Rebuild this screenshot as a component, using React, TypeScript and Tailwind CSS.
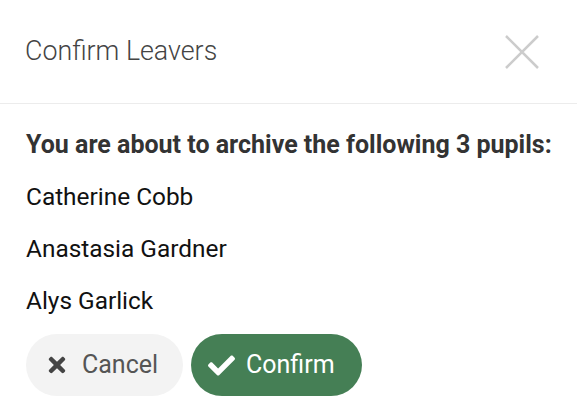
import { FaCheck, FaTimes } from "react-icons/fa";

const pupils = ["Catherine Cobb", "Anastasia Gardner", "Alys Garlick"];

export default function App() {
  return (
    <div className="w-[577px] h-[420px] bg-white font-['Roboto',sans-serif] overflow-hidden">
      <div className="h-[104px] flex items-center justify-between pl-[25px] pr-[38px] border-b border-[#ececec]">
        <h1 className="text-[26.8px] font-light text-[#444]">Confirm Leavers</h1>
        <button className="w-[34px] h-[34px] flex items-center justify-center">
          <svg width="34" height="34" viewBox="0 0 34 34">
            <path d="M1 1 L33 33 M33 1 L1 33" stroke="#cccccc" strokeWidth="2.5" />
          </svg>
        </button>
      </div>

      <div className="px-[26px] pt-[26px]">
        <p className="text-[25px] leading-[30px] font-bold text-[#333] mb-[22px] whitespace-nowrap">
          You are about to archive the following 3 pupils:
        </p>
        {pupils.map((name) => (
          <p key={name} className="text-[24.4px] leading-[30px] text-[#111] mb-[22px]">
            {name}
          </p>
        ))}

        <div className="flex gap-[8px] -mt-[4px]">
          <button className="h-[62px] w-[157px] rounded-full bg-[#f3f3f3] text-[#555] text-[25px] flex items-center pl-[19px] gap-[13px]">
            <FaTimes className="w-[24px] h-[24px] text-[#444]" />
            Cancel
          </button>
          <button className="h-[62px] w-[171px] rounded-full bg-[#457f55] text-white text-[25px] flex items-center pl-[17px] gap-[11px]">
            <FaCheck className="w-[27px] h-[27px]" />
            Confirm
          </button>
        </div>
      </div>
    </div>
  );
}
